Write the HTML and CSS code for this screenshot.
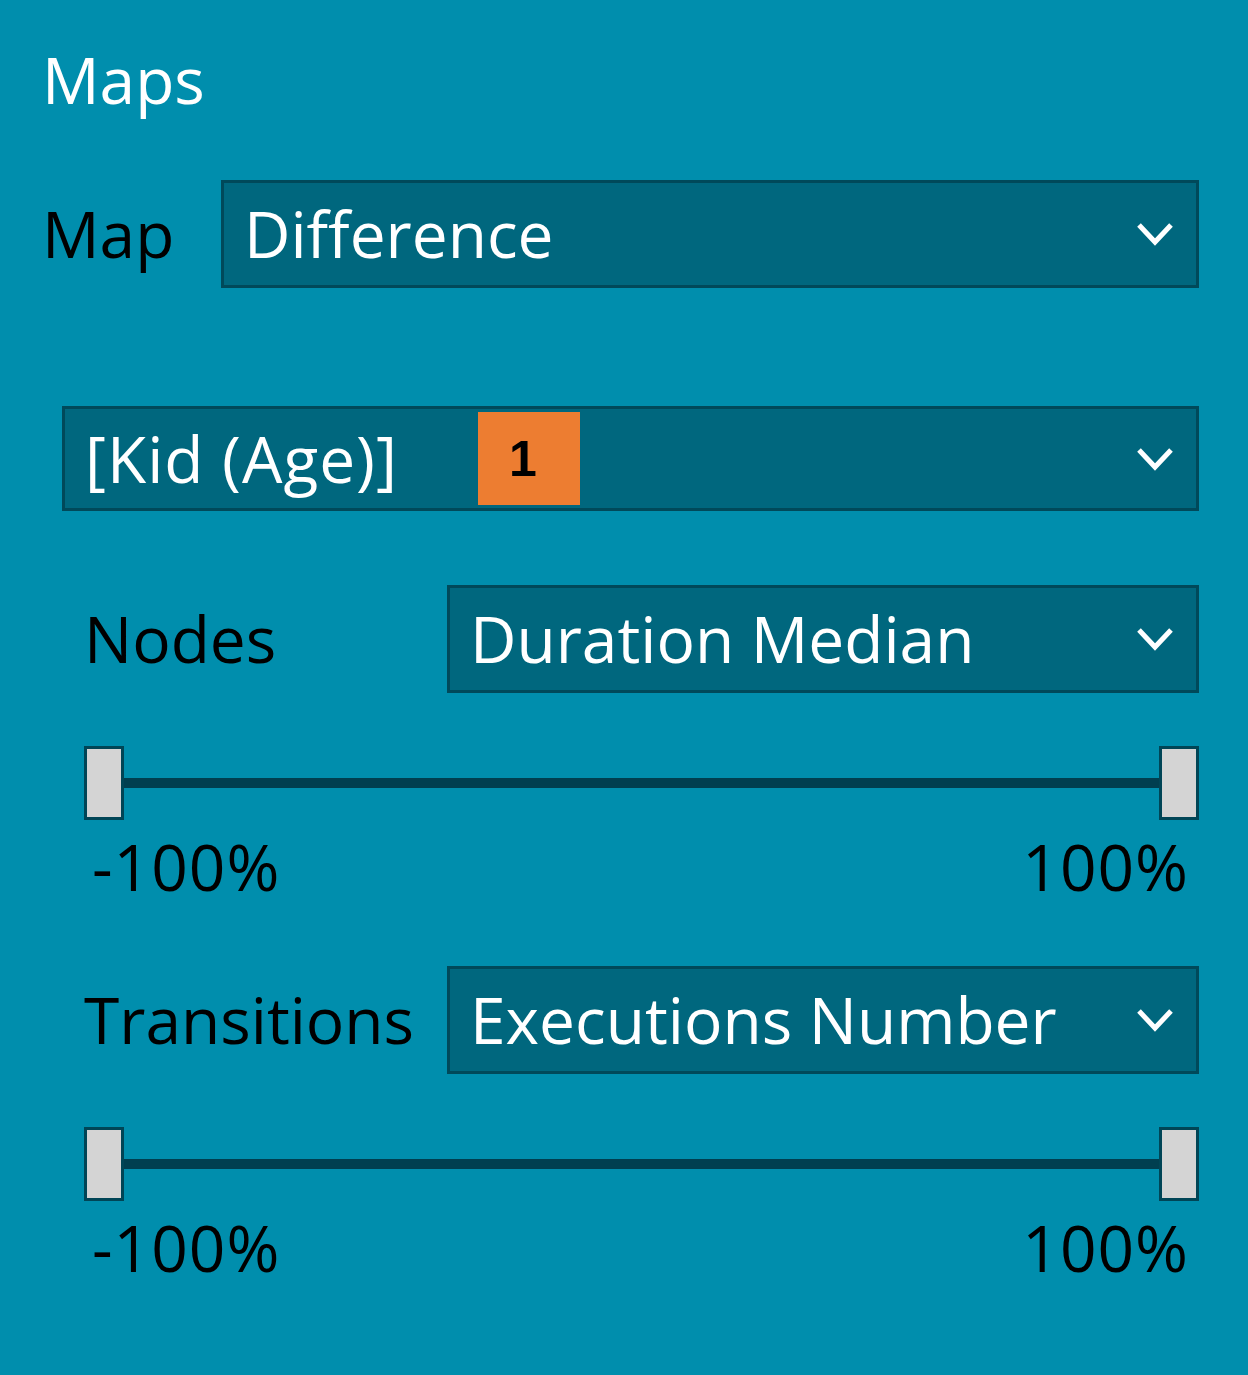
FILE: index.html
```html
<!DOCTYPE html>
<html lang="en">
<head>
  <meta charset="UTF-8" />
  <meta name="viewport" content="width=device-width, initial-scale=1.0"/>
  <title>Maps</title>
  <link rel="stylesheet" href="styles.css">
</head>
<body>

  <div class="panel">
    <div class="title">Maps</div>

    <div class="row map-row">
      <span class="label map-label">Map</span>
      <div class="select">
        <span class="value">Difference</span>
        <svg class="chevron" viewBox="0 0 40 30"><polyline points="4,6 20,23 36,6" /></svg>
      </div>
    </div>

    <div class="select kid-select">
      <span class="value">[Kid (Age)]</span>
      <span class="badge">1</span>
      <svg class="chevron" viewBox="0 0 40 30"><polyline points="4,6 20,23 36,6" /></svg>
    </div>

    <div class="group">
      <div class="row">
        <span class="label">Nodes</span>
        <div class="select">
          <span class="value">Duration Median</span>
          <svg class="chevron" viewBox="0 0 40 30"><polyline points="4,6 20,23 36,6" /></svg>
        </div>
      </div>

      <div class="slider">
        <div class="thumb"></div>
        <div class="track"></div>
        <div class="thumb"></div>
      </div>
      <div class="range">
        <span>-100%</span>
        <span>100%</span>
      </div>
    </div>

    <div class="group transitions">
      <div class="row">
        <span class="label">Transitions</span>
        <div class="select">
          <span class="value">Executions Number</span>
          <svg class="chevron" viewBox="0 0 40 30"><polyline points="4,6 20,23 36,6" /></svg>
        </div>
      </div>

      <div class="slider">
        <div class="thumb"></div>
        <div class="track"></div>
        <div class="thumb"></div>
      </div>
      <div class="range">
        <span>-100%</span>
        <span>100%</span>
      </div>
    </div>
  </div>

</body>
</html>
```

FILE: styles.css
```css
body {
  margin: 0;
  background-color: #008ead;
  font-family: "Segoe UI", "Open Sans", sans-serif;
  height: 1375px;
  overflow: hidden;
}

.panel {
  padding: 35px 49px 0 42px;
}

.title {
  color: white;
  font-size: 64px;
  line-height: 90px;
  height: 90px;
}

.row {
  display: flex;
  align-items: center;
}

.map-row {
  margin-top: 55px;
}

.label {
  color: black;
  font-size: 64px;
  line-height: 90px;
}

.map-label {
  width: 179px;
  flex: none;
}

.select {
  flex: 1;
  height: 108px;
  box-sizing: border-box;
  background-color: #00677e;
  border: 3px solid #00495a;
  display: flex;
  align-items: center;
  padding: 0 24px 0 20px;
}

.select .value {
  color: white;
  font-size: 64px;
  line-height: 90px;
  flex: 1;
  white-space: nowrap;
}

.chevron {
  width: 40px;
  height: 30px;
  flex: none;
  margin-right: -3px;
}

.chevron polyline {
  fill: none;
  stroke: white;
  stroke-width: 5;
}

.kid-select {
  margin: 118px 0 0 20px;
  height: 105px;
}

.kid-select .value {
  flex: none;
  width: 393px;
  letter-spacing: 1px;
}

.badge {
  width: 102px;
  height: 93px;
  background-color: #ed7d31;
  color: black;
  font-family: "Liberation Sans", Arial, sans-serif;
  font-weight: bold;
  font-size: 50px;
  display: flex;
  align-items: center;
  justify-content: center;
  padding-right: 12px;
  box-sizing: border-box;
  margin-right: auto;
}

.group {
  padding-left: 42px;
  margin-top: 74px;
}

.group .label {
  width: 363px;
  flex: none;
}

.transitions {
  margin-top: 52px;
}

.slider {
  display: flex;
  align-items: center;
  height: 74px;
  margin-top: 53px;
}

.thumb {
  width: 34px;
  height: 68px;
  background-color: #d4d4d4;
  border: 3px solid #004556;
  flex: none;
}

.track {
  flex: 1;
  height: 10px;
  background-color: #003f50;
}

.range {
  display: flex;
  justify-content: space-between;
  padding: 0 10px 0 8px;
  font-size: 64px;
  line-height: 94px;
  letter-spacing: 1px;
  color: black;
}
```
